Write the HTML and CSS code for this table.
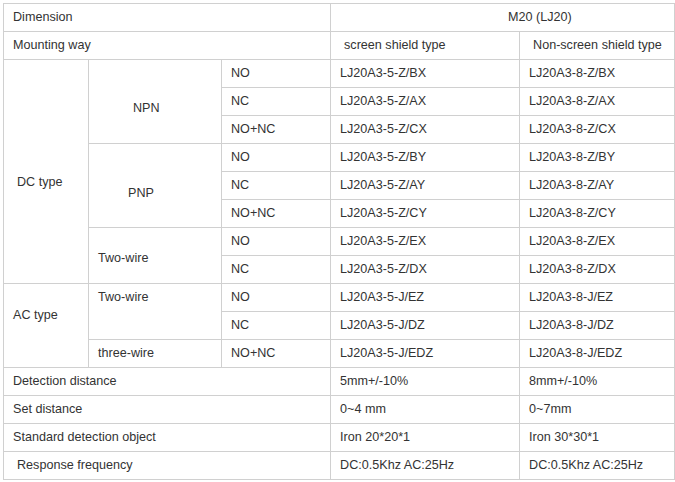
FILE: index.html
```html
<!DOCTYPE html>
<html>
<head>
<meta charset="utf-8">
<link rel="stylesheet" href="styles.css">
</head>
<body>
<table class="spec">
  <colgroup>
    <col class="c1"><col class="c2"><col class="c3"><col class="c4"><col class="c5">
  </colgroup>
  <tr><td colspan="3">Dimension</td><td colspan="2" class="model">M20 (LJ20)</td></tr>
  <tr><td colspan="3">Mounting way</td><td class="ind">screen shield type</td><td class="ind">Non-screen shield type</td></tr>
  <tr><td rowspan="8" class="dc">DC type</td><td rowspan="3" class="npn">NPN</td><td>NO</td><td>LJ20A3-5-Z/BX</td><td>LJ20A3-8-Z/BX</td></tr>
  <tr><td>NC</td><td>LJ20A3-5-Z/AX</td><td>LJ20A3-8-Z/AX</td></tr>
  <tr><td>NO+NC</td><td>LJ20A3-5-Z/CX</td><td>LJ20A3-8-Z/CX</td></tr>
  <tr><td rowspan="3" class="pnp">PNP</td><td>NO</td><td>LJ20A3-5-Z/BY</td><td>LJ20A3-8-Z/BY</td></tr>
  <tr><td>NC</td><td>LJ20A3-5-Z/AY</td><td>LJ20A3-8-Z/AY</td></tr>
  <tr><td>NO+NC</td><td>LJ20A3-5-Z/CY</td><td>LJ20A3-8-Z/CY</td></tr>
  <tr><td rowspan="2" class="dc2">Two-wire</td><td>NO</td><td>LJ20A3-5-Z/EX</td><td>LJ20A3-8-Z/EX</td></tr>
  <tr><td>NC</td><td>LJ20A3-5-Z/DX</td><td>LJ20A3-8-Z/DX</td></tr>
  <tr><td rowspan="3" class="ac">AC type</td><td rowspan="2" class="ac2">Two-wire</td><td>NO</td><td>LJ20A3-5-J/EZ</td><td>LJ20A3-8-J/EZ</td></tr>
  <tr><td>NC</td><td>LJ20A3-5-J/DZ</td><td>LJ20A3-8-J/DZ</td></tr>
  <tr><td>three-wire</td><td>NO+NC</td><td>LJ20A3-5-J/EDZ</td><td>LJ20A3-8-J/EDZ</td></tr>
  <tr><td colspan="3">Detection distance</td><td>5mm+/-10%</td><td>8mm+/-10%</td></tr>
  <tr><td colspan="3">Set distance</td><td>0~4 mm</td><td>0~7mm</td></tr>
  <tr><td colspan="3">Standard detection object</td><td>Iron 20*20*1</td><td>Iron 30*30*1</td></tr>
  <tr><td colspan="3" class="ind">Response frequency</td><td>DC:0.5Khz AC:25Hz</td><td>DC:0.5Khz AC:25Hz</td></tr>
</table>
</body>
</html>
```

FILE: styles.css
```css
html, body {
  margin: 0;
  padding: 0;
  background: #fff;
}
.spec {
  margin: 3px 0 0 3px;
  border-collapse: collapse;
  table-layout: fixed;
  width: 671px;
  font-family: "Liberation Sans", Arial, sans-serif;
  font-size: 12.6px;
  color: #333;
}
.c1 { width: 85px; }
.c2 { width: 133px; }
.c3 { width: 109px; }
.c4 { width: 189px; }
.c5 { width: 155px; }
.spec td {
  border: 1px solid #d0d0d0;
  height: 27px;
  padding: 0 0 0 9px;
  vertical-align: middle;
  white-space: nowrap;
  line-height: 15px;
}
.spec td.model { padding-left: 177px; }
.spec td.ind { padding-left: 13px; }
.spec td.dc { padding-left: 13px; padding-top: 22px; }
.spec td.npn { padding-left: 44px; padding-top: 14px; }
.spec td.pnp { padding-left: 39px; padding-top: 16px; }
.spec td.dc2 { padding-top: 6px; }
.spec td.ac { padding-bottom: 20px; }
.spec td.ac2 { vertical-align: top; padding-top: 6px; }
```
